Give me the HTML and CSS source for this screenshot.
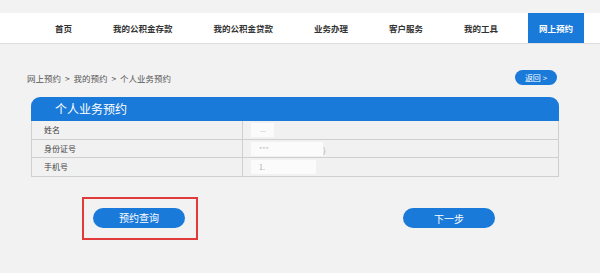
FILE: index.html
```html
<!DOCTYPE html>
<html lang="zh-CN">
<head>
    <meta charset="UTF-8">
    <meta name="viewport" content="width=device-width, initial-scale=1.0">
    <title>个人业务预约</title>
    <link rel="stylesheet" href="styles.css">
</head>
<body>
    <div class="topbar"></div>

    <nav class="nav">
        <ul class="nav-list">
            <li class="nav-item">首页</li>
            <li class="nav-item">我的公积金存款</li>
            <li class="nav-item">我的公积金贷款</li>
            <li class="nav-item">业务办理</li>
            <li class="nav-item">客户服务</li>
            <li class="nav-item">我的工具</li>
            <li class="nav-item active">网上预约</li>
        </ul>
    </nav>

    <div class="main">
        <div class="crumb-row">
            <div class="crumb">网上预约 &gt; 我的预约 &gt; 个人业务预约</div>
            <button class="btn-back">返回 &gt;</button>
        </div>

        <div class="panel">
            <div class="panel-title">个人业务预约</div>
            <table class="info-table">
                <tr>
                    <td class="label">姓名</td>
                    <td class="value"><span class="mask mask-short">—</span></td>
                </tr>
                <tr>
                    <td class="label">身份证号</td>
                    <td class="value"><span class="mask mask-id">***</span><span class="paren">)</span></td>
                </tr>
                <tr>
                    <td class="label">手机号</td>
                    <td class="value"><span class="mask mask-phone">1.</span></td>
                </tr>
            </table>
        </div>

        <div class="actions">
            <div class="highlight">
                <button class="btn-blue">预约查询</button>
            </div>
            <button class="btn-blue btn-next">下一步</button>
        </div>
    </div>
</body>
</html>
```

FILE: styles.css
```css
* {
    margin: 0;
    padding: 0;
    box-sizing: border-box;
    font-family: "Microsoft YaHei", "Noto Sans CJK SC", sans-serif;
}

body {
    background-color: #f2f2f2;
    width: 600px;
    height: 273px;
    overflow: hidden;
}

.topbar {
    height: 13px;
}

/* 导航 */
.nav {
    background: #ffffff;
    height: 31px;
    border-bottom: 1px solid #dedede;
}

.nav-list {
    list-style: none;
    display: flex;
    gap: 19px;
    padding-left: 44px;
    height: 30px;
}

.nav-item {
    padding: 0 11px;
    line-height: 30px;
    font-size: 8.5px;
    color: #333;
    font-weight: bold;
    white-space: nowrap;
}

.nav-item.active {
    background: #1a7ad9;
    color: #fff;
}

/* 面包屑 */
.main {
    padding: 0 43px 0 27px;
}

.crumb-row {
    display: flex;
    justify-content: space-between;
    align-items: center;
    margin-top: 26px;
    height: 15px;
}

.crumb {
    font-size: 8.5px;
    word-spacing: 2px;
    color: #555;
}

.btn-back {
    background: #1a7ad9;
    color: #fff;
    border: none;
    border-radius: 8px;
    font-size: 8px;
    width: 42px;
    height: 15px;
}

/* 信息面板 */
.panel {
    margin: 12px 0 0 4px;
    width: 528px;
}

.panel-title {
    background: #1a7ad9;
    color: #fff;
    height: 24px;
    line-height: 24px;
    border-radius: 9px 9px 0 0;
    padding-left: 24px;
    font-size: 12px;
}

.info-table {
    width: 100%;
    border-collapse: collapse;
    background: #f1f1f1;
}

.info-table td {
    height: 18.4px;
    border: 1px solid #cfcfcf;
    font-size: 8px;
    color: #444;
    padding: 0;
}

.info-table tr:first-child td {
    border-top: none;
}

.info-table .label {
    width: 211px;
    padding-left: 12px;
}

.info-table .value {
    padding-left: 8px;
}

.mask {
    display: inline-block;
    background: #fbfbfb;
    color: #bbb;
    font-size: 7px;
    height: 14px;
    line-height: 14px;
    vertical-align: middle;
    padding-left: 8px;
}

.mask-short {
    width: 23px;
    padding-left: 9px;
}

.mask-id {
    width: 72px;
    padding-left: 8px;
}

.mask-phone {
    width: 65px;
    padding-left: 8px;
    color: #aaa;
}

.paren {
    color: #aaa;
    font-size: 8px;
    vertical-align: middle;
}

/* 按钮 */
.actions {
    display: flex;
    align-items: center;
    margin-top: 20px;
    padding-left: 55px;
}

.highlight {
    border: 2px solid #e03a3a;
    padding: 9px 11px 10px 9px;
}

.btn-blue {
    background: #1a7ad9;
    color: #fff;
    border: none;
    border-radius: 10px;
    width: 92px;
    height: 20px;
    font-size: 10px;
    display: block;
}

.btn-next {
    margin-left: 205px;
}
```
